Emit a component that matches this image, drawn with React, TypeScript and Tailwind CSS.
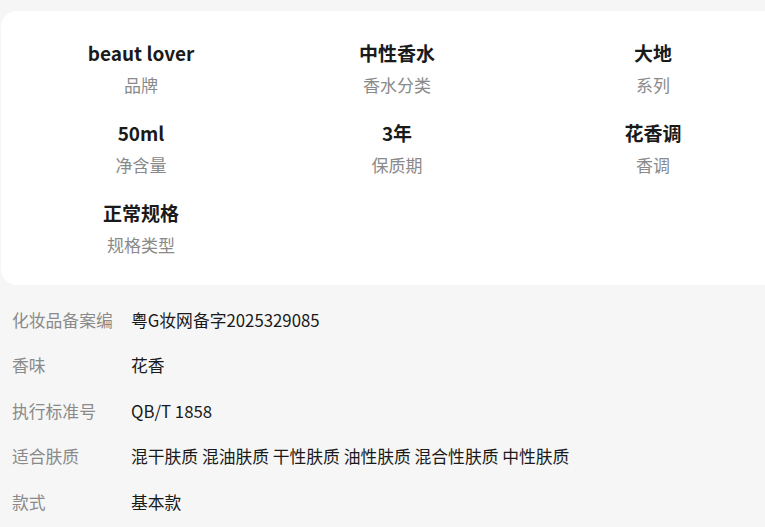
const specs = [
  { value: 'beaut lover', label: '品牌' },
  { value: '中性香水', label: '香水分类' },
  { value: '大地', label: '系列' },
  { value: '50ml', label: '净含量' },
  { value: '3年', label: '保质期' },
  { value: '花香调', label: '香调' },
  { value: '正常规格', label: '规格类型' },
]

const attrs = [
  { key: '化妆品备案编', val: '粤G妆网备字2025329085' },
  { key: '香味', val: '花香' },
  { key: '执行标准号', val: 'QB/T 1858' },
  { key: '适合肤质', val: '混干肤质 混油肤质 干性肤质 油性肤质 混合性肤质 中性肤质' },
  { key: '款式', val: '基本款' },
]

export default function App() {
  return (
    <div
      className="w-[765px] h-[527px] overflow-hidden bg-[#f6f6f6] pt-[11px]"
      style={{ fontFamily: '"Noto Sans CJK SC", "Noto Sans", sans-serif' }}
    >
      <div className="ml-[1px] w-[792px] rounded-[16px] bg-white px-[12px] pt-[29px] pb-[28px]">
        <div className="grid grid-cols-3 gap-y-[23px]">
          {specs.map((s) => (
            <div key={s.label} className="flex flex-col items-center">
              <div className="text-[19px] leading-[26px] font-bold text-[#1a1a1a]">{s.value}</div>
              <div className="mt-[7px] text-[17px] leading-[24px] text-[#8a8a8a]">{s.label}</div>
            </div>
          ))}
        </div>
      </div>

      <ul className="mt-[12px] px-[12px]">
        {attrs.map((a) => (
          <li key={a.key} className="flex h-[45.5px] items-center text-[16.8px] leading-[24px]">
            <span className="w-[119px] shrink-0 text-[#8a8a8a]">{a.key}</span>
            <span className="whitespace-nowrap text-[#1a1a1a]">{a.val}</span>
          </li>
        ))}
      </ul>
    </div>
  )
}
